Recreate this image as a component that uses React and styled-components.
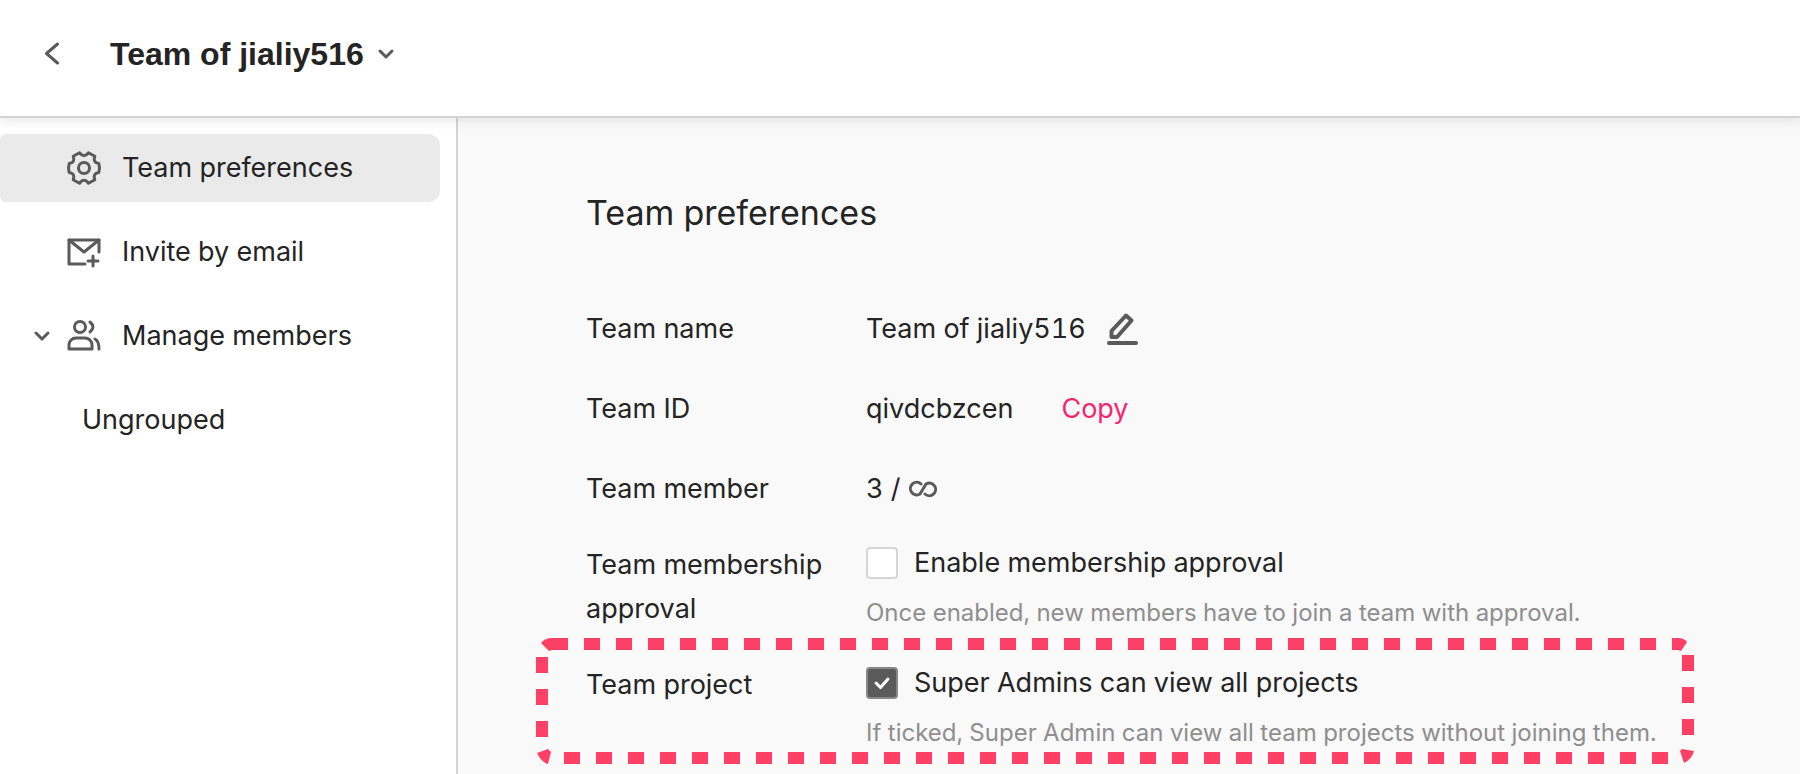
import React from 'react';
import styled, { createGlobalStyle } from 'styled-components';

const GlobalStyle = createGlobalStyle`
  *, *::before, *::after {
    box-sizing: border-box;
  }
  body {
    background: #f9f9f9;
    color: #242424;
    font-family: Inter, "Liberation Sans", sans-serif;
    font-size: 27px;
    font-variant-numeric: tabular-nums;
    line-height: 44px;
    margin: 0;
  }
  button {
    background: none;
    border: 0;
    color: inherit;
    cursor: pointer;
    font: inherit;
    padding: 0;
  }
  svg {
    display: block;
    flex: none;
  }
`;

const Page = styled.div`
  display: flex;
  flex-direction: column;
  min-height: 100vh;
`;

const Header = styled.header`
  align-items: center;
  background: #fff;
  border-bottom: 2px solid #d3d3d3;
  box-shadow: 0 2px 12px rgba(0, 0, 0, 0.1);
  display: flex;
  gap: 46px;
  height: 118px;
  padding: 0 40px 8px;
  position: relative;
`;

const BackButton = styled.button`
  color: #5a5a5a;
`;

const TeamSwitcher = styled.button`
  align-items: center;
  color: #5a5a5a;
  display: flex;
  gap: 10px;
`;

const TeamTitle = styled.span`
  color: #242424;
  font: bold 32px/44px "Liberation Sans", Arial, sans-serif;
`;

const Body = styled.div`
  display: flex;
  flex: 1;
`;

const Sidebar = styled.nav`
  background: #fff;
  border-right: 2px solid #d3d3d3;
  flex: none;
  padding: 16px 16px 0 0;
  width: 458px;
`;

const NavList = styled.ul`
  display: flex;
  flex-direction: column;
  gap: 16px;
  list-style: none;
  margin: 0;
  padding: 0;
`;

const NavLink = styled.a`
  align-items: center;
  background: ${({ $active }) => ($active ? '#eaeaea' : 'transparent')};
  border-radius: 6px 12px 12px 6px;
  color: #242424;
  display: flex;
  gap: 20px;
  height: 68px;
  padding-left: ${({ $indent }) => $indent || 66}px;
  text-decoration: none;
  svg {
    color: #5a5a5a;
  }
`;

const ManageIcons = styled.span`
  align-items: center;
  display: flex;
  gap: 12px;
`;

const Content = styled.main`
  flex: 1;
  min-width: 0;
  padding: 71px 40px 8px 128px;
`;

const Heading = styled.h1`
  font-size: 34px;
  font-weight: 400;
  line-height: 48px;
  margin: 0 0 70px;
`;

const Settings = styled.div`
  display: flex;
  flex-direction: column;
`;

const Row = styled.div`
  display: grid;
  grid-template-columns: 280px 1fr;
  padding-bottom: ${({ $space }) => $space}px;
  position: relative;
`;

const RowLabel = styled.div`
  padding-right: 28px;
`;

const RowValue = styled.div`
  align-items: center;
  display: flex;
  gap: ${({ $gap }) => $gap}px;
  svg {
    color: #5a5a5a;
  }
`;

const CopyButton = styled.button`
  color: #f5266d;
`;

const CheckLabel = styled.label`
  align-items: center;
  cursor: pointer;
  display: flex;
  gap: 16px;
  line-height: 40px;
`;

const Checkbox = styled.input`
  appearance: none;
  background: #fff center / 28px no-repeat;
  border: 2px solid #d6d6d6;
  border-radius: 4px;
  flex: none;
  height: 32px;
  margin: 0;
  width: 32px;
  &:checked {
    background-color: #5a5a5a;
    background-image: url("data:image/svg+xml,%3Csvg xmlns='http://www.w3.org/2000/svg' viewBox='0 0 28 28' fill='none' stroke='white' stroke-width='3' stroke-linecap='round' stroke-linejoin='round'%3E%3Cpath d='M8 14l4.500 4.500L20 10'/%3E%3C/svg%3E");
    border-color: #888;
  }
`;

const Hint = styled.p`
  color: #8e8e8e;
  font-size: 24px;
  line-height: 40px;
  margin: 10px 0 0;
`;

// Sits over the row and runs past its edges on every side
const Highlight = styled.svg`
  height: 126px;
  left: -50px;
  pointer-events: none;
  position: absolute;
  top: -25px;
  width: 1158px;
`;

const Icon = ({ width, height = width, stroke = 3, children }) => (
  <svg
    width={width}
    height={height}
    viewBox={`0 0 ${width} ${height}`}
    fill="none"
    stroke="currentColor"
    strokeWidth={stroke}
    strokeLinecap="round"
    strokeLinejoin="round"
    aria-hidden="true"
  >
    {children}
  </svg>
);

const BackIcon = () => (
  <Icon width={24}>
    <path d="M17.500 2L6.500 11.500l11 9.500" />
  </Icon>
);

const ChevronDown = () => (
  <Icon width={24}>
    <path d="M6 9l6 6 6-6" />
  </Icon>
);

const GearIcon = () => (
  <Icon width={36}>
    <circle cx="18" cy="18" r="5.500" />
    <path d="M13.500 2.800Q18 8.500 22.500 2.800L28.800 6.200Q26.500 12.500 32.800 13.500Q34.200 18 32.800 22.500Q26.500 23.500 28.800 29.800L22.500 33.200Q18 27.500 13.500 33.200L7.200 29.800Q9.500 23.500 3.200 22.500Q1.800 18 3.200 13.500Q9.500 12.500 7.200 6.200z" />
  </Icon>
);

const MailPlusIcon = () => (
  <Icon width={36}>
    <path d="M19 30H3V6h30v12" />
    <path d="M3 6l15 12L33 6" />
    <path d="M27 22v10M22 27h10" />
  </Icon>
);

const MembersIcon = () => (
  <Icon width={36}>
    <circle cx="14" cy="9" r="5.500" />
    <path d="M3 31v-4a7 7 0 0 1 7-7h9a7 7 0 0 1 7 7v4z" />
    <path d="M24 4q6 5 0 10M29 21q4 2 4 10" />
  </Icon>
);

const PencilIcon = () => (
  <Icon width={32} height={36} stroke={4}>
    <path d="M5.500 26v-6L20 4.500l5.500 5L11 26z" />
    <path d="M3 32h27" />
  </Icon>
);

const InfinityIcon = () => (
  <Icon width={28} height={20}>
    <path d="M12 5A6.300 6.300 0 1 0 11 15L17 5a6.300 6.300 0 1 1-1 10" />
  </Icon>
);

const App = () => (
  <Page>
    <GlobalStyle />
    <Header>
      <BackButton type="button" aria-label="Back">
        <BackIcon />
      </BackButton>
      <TeamSwitcher type="button">
        <TeamTitle>Team of jialiy516</TeamTitle>
        <ChevronDown />
      </TeamSwitcher>
    </Header>
    <Body>
      <Sidebar>
        <NavList>
          <li>
            <NavLink href="#preferences" $active>
              <GearIcon />
              Team preferences
            </NavLink>
          </li>
          <li>
            <NavLink href="#invite">
              <MailPlusIcon />
              Invite by email
            </NavLink>
          </li>
          <li>
            <NavLink href="#members" $indent={30}>
              <ManageIcons>
                <ChevronDown />
                <MembersIcon />
              </ManageIcons>
              Manage members
            </NavLink>
          </li>
          <li>
            <NavLink href="#ungrouped" $indent={82}>Ungrouped</NavLink>
          </li>
        </NavList>
      </Sidebar>
      <Content>
        <Heading>Team preferences</Heading>
        <Settings>
          <Row $space={36}>
            <RowLabel>Team name</RowLabel>
            <RowValue $gap={20}>
              Team of jialiy516
              <button type="button" aria-label="Edit team name">
                <PencilIcon />
              </button>
            </RowValue>
          </Row>
          <Row $space={36}>
            <RowLabel>Team ID</RowLabel>
            <RowValue $gap={48}>
              qivdcbzcen
              <CopyButton type="button">Copy</CopyButton>
            </RowValue>
          </Row>
          <Row $space={32}>
            <RowLabel>Team member</RowLabel>
            <RowValue $gap={8}>
              3 /
              <InfinityIcon />
            </RowValue>
          </Row>
          <Row $space={30}>
            <RowLabel>Team membership approval</RowLabel>
            <div>
              <CheckLabel>
                <Checkbox type="checkbox" />
                Enable membership approval
              </CheckLabel>
              <Hint>Once enabled, new members have to join a team with approval.</Hint>
            </div>
          </Row>
          <Row $space={0}>
            <RowLabel>Team project</RowLabel>
            <div>
              <CheckLabel>
                <Checkbox type="checkbox" defaultChecked />
                Super Admins can view all projects
              </CheckLabel>
              <Hint>If ticked, Super Admin can view all team projects without joining them.</Hint>
            </div>
            <Highlight viewBox="0 0 1158 126" fill="#ff4066" aria-hidden="true">
              <path
                d="M16 6H1142M1152 17V97M28 120H1132M6 19V99"
                fill="none"
                stroke="#ff4066"
                strokeWidth="12"
                strokeDasharray="16 16"
              />
              <path d="M5 5Q9 0 16 0V12L13 13z" />
              <path d="M1142 0Q1148 0 1151 4L1145 13L1142 12z" />
              <path d="M1144 113L1146 111L1158 113Q1156 121 1148 125z" />
              <path d="M1 115L12 111L15 114L12 126Q5 124 1 115z" />
            </Highlight>
          </Row>
        </Settings>
      </Content>
    </Body>
  </Page>
);

export default App;
